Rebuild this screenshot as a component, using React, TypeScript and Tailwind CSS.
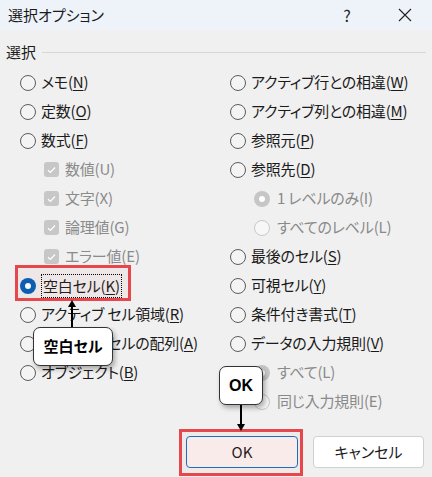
import React from 'react';

type Item = {
  label: string;
  key?: string;
  kind: 'radio' | 'check' | 'subradio';
  checked?: boolean;
  disabled?: boolean;
  focus?: boolean;
};

const leftItems: Item[] = [
  { label: 'メモ', key: 'N', kind: 'radio' },
  { label: '定数', key: 'O', kind: 'radio' },
  { label: '数式', key: 'F', kind: 'radio' },
  { label: '数値', key: 'U', kind: 'check', checked: true, disabled: true },
  { label: '文字', key: 'X', kind: 'check', checked: true, disabled: true },
  { label: '論理値', key: 'G', kind: 'check', checked: true, disabled: true },
  { label: 'エラー値', key: 'E', kind: 'check', checked: true, disabled: true },
  { label: '空白セル', key: 'K', kind: 'radio', checked: true, focus: true },
  { label: 'アクティブ セル領域', key: 'R', kind: 'radio' },
  { label: 'アクティブ セルの配列', key: 'A', kind: 'radio' },
  { label: 'オブジェクト', key: 'B', kind: 'radio' },
];

const rightItems: Item[] = [
  { label: 'アクティブ行との相違', key: 'W', kind: 'radio' },
  { label: 'アクティブ列との相違', key: 'M', kind: 'radio' },
  { label: '参照元', key: 'P', kind: 'radio' },
  { label: '参照先', key: 'D', kind: 'radio' },
  { label: '1 レベルのみ', key: 'I', kind: 'subradio', checked: true, disabled: true },
  { label: 'すべてのレベル', key: 'L', kind: 'subradio', disabled: true },
  { label: '最後のセル', key: 'S', kind: 'radio' },
  { label: '可視セル', key: 'Y', kind: 'radio' },
  { label: '条件付き書式', key: 'T', kind: 'radio' },
  { label: 'データの入力規則', key: 'V', kind: 'radio' },
  { label: 'すべて', key: 'L', kind: 'subradio', checked: true, disabled: true },
  { label: '同じ入力規則', key: 'E', kind: 'subradio', disabled: true },
];

function RadioMark({ checked, disabled }: { checked?: boolean; disabled?: boolean }) {
  if (checked) {
    return (
      <span
        className={`w-[16px] h-[16px] rounded-full shrink-0 flex items-center justify-center ${
          disabled ? 'bg-[#c6c6c6]' : 'bg-[#005fb8]'
        }`}
      >
        <span className="w-[6px] h-[6px] rounded-full bg-white" />
      </span>
    );
  }
  return (
    <span
      className={`w-[16px] h-[16px] rounded-full shrink-0 border ${
        disabled ? 'border-[#c8c8c8] bg-[#f7f7f7]' : 'border-[#5c5c5c] bg-[#f4f4f4]'
      }`}
    />
  );
}

function CheckMark() {
  return (
    <span className="w-[15px] h-[15px] rounded-[3px] bg-[#c7c7c7] shrink-0 flex items-center justify-center">
      <svg width="9" height="8" viewBox="0 0 9 8" fill="none">
        <path d="M1 4.2 L3.4 6.5 L8 1.5" stroke="white" strokeWidth="1.2" />
      </svg>
    </span>
  );
}

function Row({ item }: { item: Item }) {
  const text = (
    <span className={item.disabled ? 'text-[#8a8a8a]' : 'text-[#1b1b1b]'}>
      {item.label}(
      {item.disabled ? item.key : <span className="underline underline-offset-[2px]">{item.key}</span>})
    </span>
  );
  const indent = item.kind === 'check' ? 'pl-[24px] gap-[6px]' : item.kind === 'subradio' ? 'pl-[24px] gap-[7px]' : 'gap-[5px]';
  return (
    <div className={`h-[29px] flex items-center tracking-[-0.2px] ${indent}`}>
      {item.kind === 'check' ? <CheckMark /> : <RadioMark checked={item.checked} disabled={item.disabled} />}
      {item.focus ? (
        <span className="border border-dotted border-black px-[1px] leading-[22px]">{text}</span>
      ) : (
        text
      )}
    </div>
  );
}

export default function App() {
  return (
    <div className="w-[432px] h-[477px] bg-[#f0f0f0] relative overflow-hidden font-['Noto_Sans_CJK_JP','Noto_Sans',sans-serif] text-[15px] [font-feature-settings:'palt'] text-[#1b1b1b]">
      {/* title bar */}
      <div className="h-[30px] bg-[#eef2f9] flex items-center pl-[8px]">
        <span className="flex-1 text-[15px]">選択オプション</span>
        <span className="w-[62px] text-center text-[16px] text-[#222]">?</span>
        <span className="w-[54px] flex justify-center">
          <svg width="14" height="14" viewBox="0 0 14 14">
            <path d="M1 1 L13 13 M13 1 L1 13" stroke="#222" strokeWidth="1.1" />
          </svg>
        </span>
      </div>

      {/* group header */}
      <div className="pt-[12px] px-[6px] flex items-center gap-[6px] h-[20px] box-content">
        <span className="leading-[20px]">選択</span>
        <span className="flex-1 h-px bg-[#d8d8d8]" />
      </div>

      {/* options */}
      <div className="mt-[6px] pl-[20px] flex">
        <div className="w-[210px] flex flex-col">
          {leftItems.map((it, i) => (
            <Row key={i} item={it} />
          ))}
        </div>
        <div className="flex-1 flex flex-col">
          {rightItems.map((it, i) => (
            <Row key={i} item={it} />
          ))}
        </div>
      </div>

      {/* buttons */}
      <div className="mt-[20px] flex justify-end gap-[15px] pr-[8px]">
        <button className="w-[112px] h-[32px] rounded-[4px] border border-[#1a6fc4] bg-[#fbf1f1] text-[15px]">OK</button>
        <button className="w-[111px] h-[32px] rounded-[4px] border border-[#d0d0d0] bg-white text-[15px]">キャンセル</button>
      </div>

      {/* annotation: red box around 空白セル */}
      <div className="absolute left-[15px] top-[265px] w-[116px] h-[36px] border-[3px] border-[#e5474d] bg-[#e04848]/[0.05]" />

      {/* annotation: red box around OK */}
      <div className="absolute left-[179px] top-[429px] w-[124px] h-[47px] border-[3px] border-[#e5474d] bg-[#e04848]/[0.03]" />

      {/* callout 空白セル */}
      <svg className="absolute left-[64px] top-[298px]" width="16" height="32" viewBox="0 0 16 32">
        <path d="M8 6 L8 30" stroke="black" strokeWidth="2" />
        <path d="M4 9 L8 2 L12 9 Z" fill="black" />
      </svg>
      <div className="absolute left-[33px] top-[327px] w-[80px] h-[39px] rounded-[7px] border border-[#333] bg-white shadow-[2px_3px_5px_rgba(0,0,0,0.3)] flex items-center justify-center font-bold text-[15px] text-black">
        空白セル
      </div>

      {/* callout OK */}
      <svg className="absolute left-[233px] top-[403px]" width="16" height="30" viewBox="0 0 16 30">
        <path d="M8 0 L8 22" stroke="black" strokeWidth="2" />
        <path d="M4 21 L8 28 L12 21 Z" fill="black" />
      </svg>
      <div className="absolute left-[219px] top-[366px] w-[44px] h-[39px] rounded-[7px] border border-[#333] bg-white shadow-[2px_3px_5px_rgba(0,0,0,0.3)] flex items-center justify-center font-bold text-[16px] text-black font-['Liberation_Sans',sans-serif]">
        OK
      </div>
    </div>
  );
}
